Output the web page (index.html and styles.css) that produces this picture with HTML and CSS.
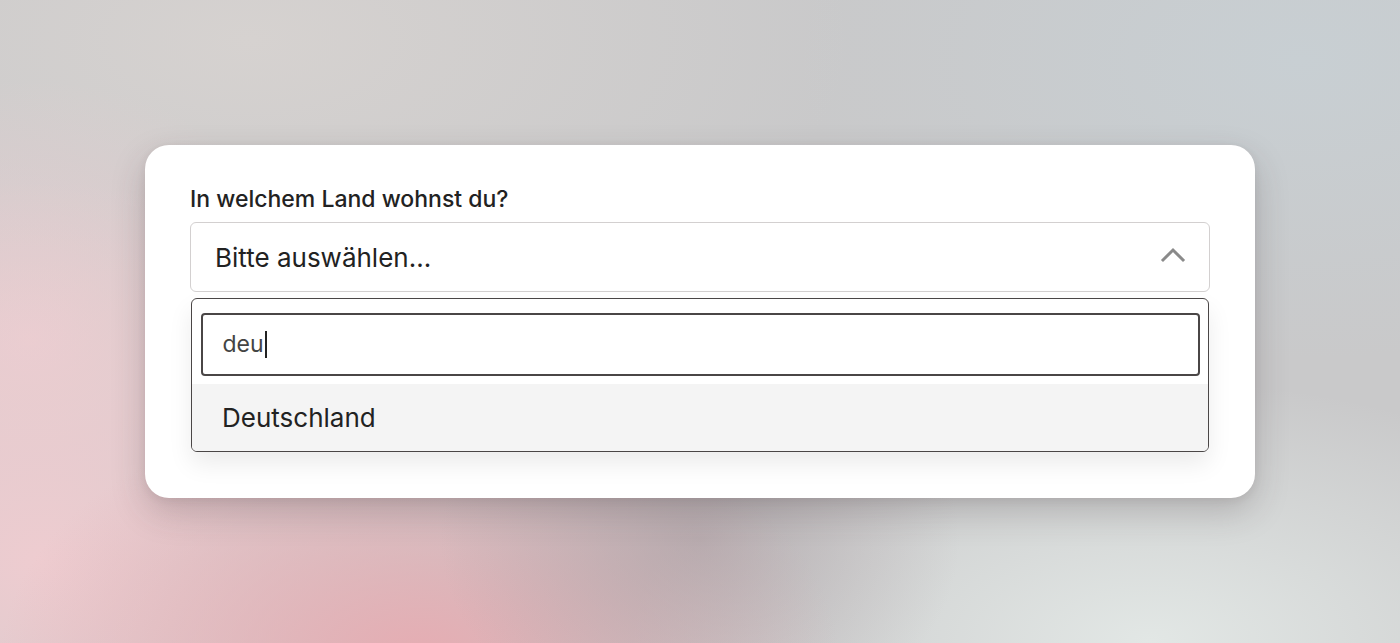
FILE: index.html
```html
<!DOCTYPE html>
<html lang="de">
<head>
<meta charset="utf-8">
<title>Land auswählen</title>
<link rel="stylesheet" href="styles.css">
</head>
<body>
<div class="stage">
  <div class="card">
    <label class="label">In welchem Land wohnst du?</label>
    <div class="select">
      <span class="select-text">Bitte auswählen...</span>
      <svg class="chevron" width="28" height="18" viewBox="0 0 28 18"><path d="M4 15 L14 5 L24 15" fill="none" stroke="#8a8a8a" stroke-width="3" stroke-linecap="square"/></svg>
    </div>
    <div class="dropdown">
      <div class="search-wrap">
        <div class="search"><span class="search-text">deu</span><span class="caret"></span></div>
      </div>
      <div class="option">Deutschland</div>
    </div>
  </div>
</div>
</body>
</html>
```
FILE: styles.css
```css
html, body {
  margin: 0;
  padding: 0;
  height: 100%;
}
body {
  font-family: Inter, "Noto Sans", "Liberation Sans", sans-serif;
  background-color: #c9c9ca;
  background-image:
    radial-gradient(ellipse 260px 200px at 700px 540px, rgba(165,150,155,0.55), rgba(165,150,155,0) 100%),
    radial-gradient(ellipse 420px 260px at 420px 660px, rgba(230,172,178,1), rgba(230,172,178,0) 100%),
    radial-gradient(ellipse 420px 380px at 40px 560px, rgba(238,204,208,1), rgba(238,204,208,0) 100%),
    radial-gradient(ellipse 300px 260px at 30px 340px, rgba(232,206,209,1), rgba(232,206,209,0) 100%),
    radial-gradient(ellipse 520px 260px at 1150px 640px, rgba(226,231,229,1), rgba(226,231,229,0) 100%),
    radial-gradient(ellipse 600px 300px at 250px 40px, rgba(214,210,208,1), rgba(214,210,208,0) 100%),
    radial-gradient(ellipse 500px 300px at 1300px 60px, rgba(200,207,211,1), rgba(200,207,211,0) 100%);
}
.stage {
  height: 100%;
  display: flex;
  align-items: center;
  justify-content: center;
}
.card {
  width: 1110px;
  box-sizing: border-box;
  background: #fff;
  border-radius: 24px;
  padding: 40px 45px 46px;
  display: flex;
  flex-direction: column;
  box-shadow: 0 14px 34px rgba(60,45,50,0.22), 0 2px 8px rgba(60,45,50,0.08);
}
.label {
  font-size: 23px;
  line-height: 28px;
  color: #222;
  font-weight: 500;
}
.select {
  margin-top: 9px;
  height: 70px;
  box-sizing: border-box;
  border: 1.5px solid #d3d0d0;
  border-radius: 6px;
  display: flex;
  align-items: center;
  justify-content: space-between;
  padding: 0 22px 0 24px;
}
.select-text {
  font-size: 26px;
  color: #222;
}
.chevron {
  display: block;
  margin-top: -6px;
}
.dropdown {
  margin: 6px 1px 0;
  border: 1.5px solid #4a4646;
  border-radius: 6px;
  overflow: hidden;
  box-shadow: 0 12px 24px rgba(0,0,0,0.08);
}
.search-wrap {
  padding: 13.5px 8.5px 8.5px;
}
.search {
  height: 63px;
  box-sizing: border-box;
  border: 2px solid #4a4646;
  border-radius: 4px;
  display: flex;
  align-items: center;
  padding-left: 20px;
}
.search-text {
  font-size: 23px;
  color: #444;
}
.caret {
  display: inline-block;
  width: 2.5px;
  height: 27px;
  background: #222;
  margin-left: 1px;
}
.option {
  height: 67px;
  background: #f4f4f4;
  display: flex;
  align-items: center;
  padding-left: 30px;
  font-size: 26px;
  color: #222;
}
```
